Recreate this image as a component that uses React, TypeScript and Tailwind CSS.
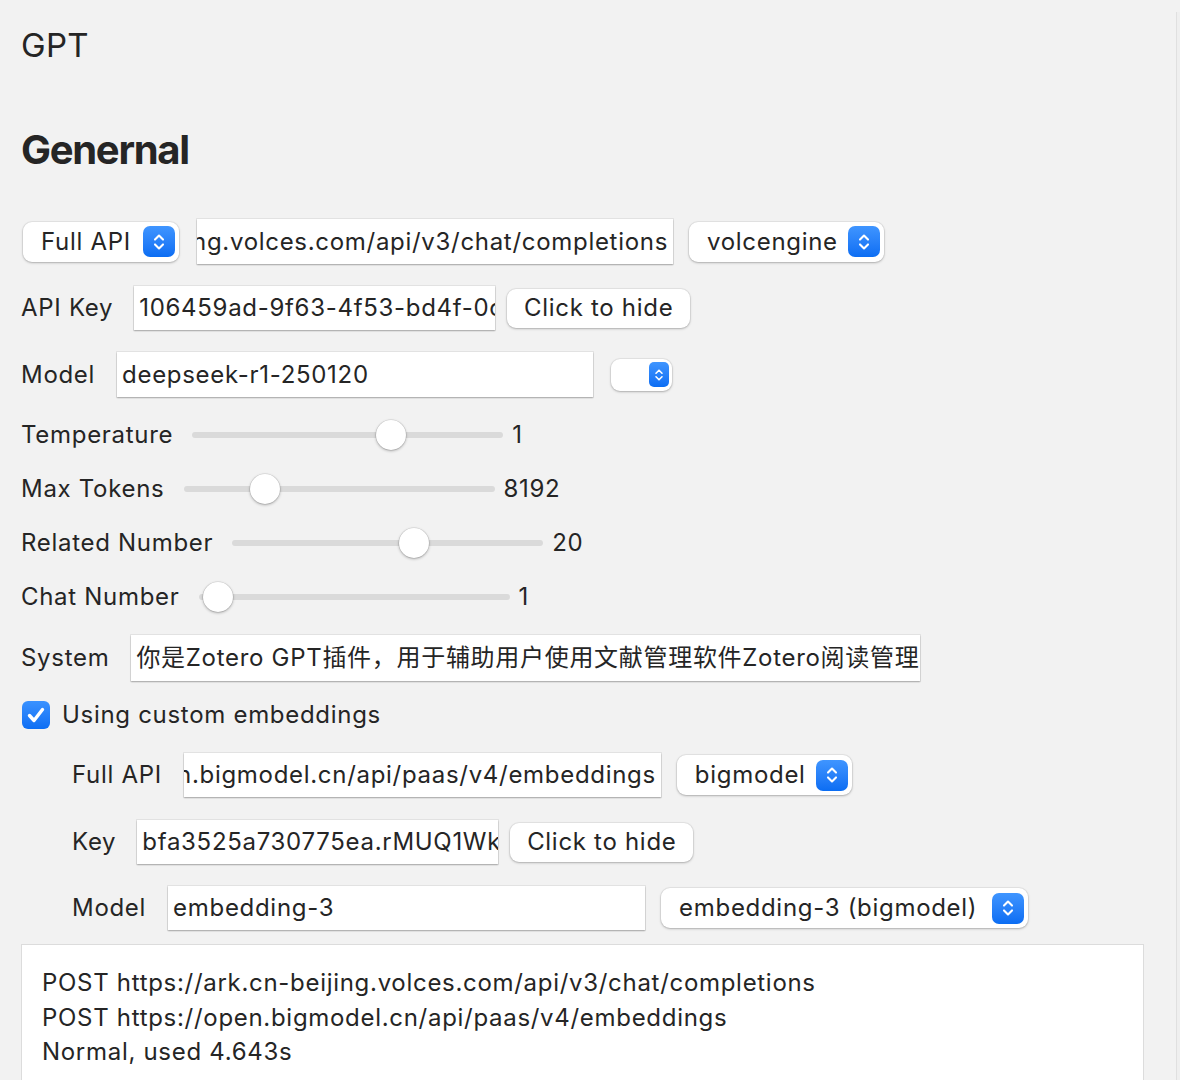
import React from "react"

const inputShadow = "bg-white shadow-[0_0_0_1px_rgba(0,0,0,0.06),0_1px_1.5px_rgba(0,0,0,0.28)]"
const popShadow = "bg-white rounded-[9px] shadow-[0_0_0_1px_rgba(0,0,0,0.05),0_1px_2.5px_rgba(0,0,0,0.25)]"

function Stepper({ small = false }: { small?: boolean }) {
  return (
    <div
      className={`flex items-center justify-center bg-gradient-to-b from-[#3f95ff] to-[#0a6df3] ${
        small ? "w-[20px] h-[25px] rounded-[5px]" : "w-[32px] h-[31px] rounded-[7px]"
      }`}
    >
      <svg viewBox="0 0 20 24" className={small ? "w-[12px] h-[16px]" : "w-[16px] h-[22px]"} fill="none" stroke="white" strokeWidth={2.6} strokeLinecap="round" strokeLinejoin="round">
        <path d="M5 9 L10 4 L15 9" />
        <path d="M5 15 L10 20 L15 15" />
      </svg>
    </div>
  )
}

function Select({ label, width }: { label: string; width: string }) {
  return (
    <div className={`${popShadow} ${width} h-[40px] flex items-center justify-between pl-[18px] pr-[4px]`}>
      <span className="whitespace-nowrap">{label}</span>
      <Stepper />
    </div>
  )
}

function Field({ text, width, end = false, height = "h-[45px]" }: { text: string; width: string; end?: boolean; height?: string }) {
  return (
    <div className={`${inputShadow} ${width} ${height} flex items-center overflow-hidden px-[5px] ${end ? "justify-end" : "justify-start"}`}>
      <span className="whitespace-nowrap shrink-0">{text}</span>
    </div>
  )
}

function HideButton() {
  return (
    <div className={`${popShadow} w-[183px] h-[39px] flex items-center justify-center`}>Click to hide</div>
  )
}

function SliderRow({ label, left, value }: { label: string; left: number; value: string }) {
  return (
    <div className="flex items-center h-[40px]">
      <span>{label}</span>
      <div className="relative ml-[19px] w-[311px] h-[6px] rounded-full bg-[#dadada]">
        <div
          className="absolute top-1/2 -translate-y-1/2 w-[30px] h-[30px] rounded-full bg-white shadow-[0_0_0_0.5px_rgba(0,0,0,0.12),0_1px_3px_rgba(0,0,0,0.3)]"
          style={{ left }}
        />
      </div>
      <span className="ml-[9px]">{value}</span>
    </div>
  )
}

export default function App() {
  return (
    <div className="flex h-[1080px] overflow-hidden bg-[#f2f2f2] text-[#252525] text-[24px] tracking-[0.7px] font-['Inter','Noto_Sans_CJK_SC',sans-serif]">
      <div className="flex-1 flex flex-col pl-[21px] pt-[25px]">
        <div className="text-[33px] leading-[40px] tracking-[0.3px]">GPT</div>
        <h1 className="mt-[61px] text-[40px] leading-[48px] font-bold tracking-[-1.3px]">Genernal</h1>

        <div className="mt-[45px] flex items-center h-[45px] pl-[2px]">
          <Select label="Full API" width="w-[156px]" />
          <div className="ml-[18px]">
            <Field text="https://ark.cn-beijing.volces.com/api/v3/chat/completions" width="w-[476px]" end />
          </div>
          <div className="ml-[16px]">
            <Select label="volcengine" width="w-[195px]" />
          </div>
        </div>

        <div className="mt-[22px] flex items-center gap-[21px] h-[44px]">
          <span>API Key</span>
          <div className="flex items-center gap-[12px]">
            <Field text="106459ad-9f63-4f53-bd4f-0c2a7e91d3b8" width="w-[361px]" height="h-[44px]" />
            <HideButton />
          </div>
        </div>

        <div className="mt-[22px] flex items-center gap-[22px] h-[45px]">
          <span>Model</span>
          <div className="flex items-center gap-[18px]">
            <Field text="deepseek-r1-250120" width="w-[476px]" />
            <div className={`${popShadow} w-[61px] h-[32px] flex items-center justify-end pr-[3px] rounded-[7px]`}>
              <Stepper small />
            </div>
          </div>
        </div>

        <div className="mt-[18px] flex flex-col gap-[14px]">
          <SliderRow label="Temperature" left={184} value="1" />
          <SliderRow label="Max Tokens" left={66} value="8192" />
          <SliderRow label="Related Number" left={167} value="20" />
          <SliderRow label="Chat Number" left={4} value="1" />
        </div>

        <div className="mt-[18px] flex items-center gap-[22px] h-[46px]">
          <span>System</span>
          <Field
            text="你是Zotero GPT插件，用于辅助用户使用文献管理软件Zotero阅读管理文献，请用中文回答问题。"
            width="w-[789px]"
            height="h-[46px]"
          />
        </div>

        <div className="mt-[16px] flex items-center h-[40px] pl-[1px]">
          <div className="w-[28px] h-[28px] rounded-[6px] bg-gradient-to-b from-[#3a92ff] to-[#0b6ef4] flex items-center justify-center">
            <svg viewBox="0 0 28 28" className="w-[28px] h-[28px]" fill="none" stroke="white" strokeWidth={3.4} strokeLinecap="round" strokeLinejoin="round">
              <path d="M7.5 14.5 L12 19.5 L20.5 8.5" />
            </svg>
          </div>
          <span className="ml-[12px]">Using custom embeddings</span>
        </div>

        <div className="pl-[51px] flex flex-col">
          <div className="mt-[20px] flex items-center gap-[22px] h-[44px]">
            <span>Full API</span>
            <div className="flex items-center gap-[16px]">
              <Field text="https://open.bigmodel.cn/api/paas/v4/embeddings" width="w-[477px]" end height="h-[44px]" />
              <Select label="bigmodel" width="w-[175px]" />
            </div>
          </div>

          <div className="mt-[23px] flex items-center gap-[21px] h-[44px]">
            <span>Key</span>
            <div className="flex items-center gap-[12px]">
              <Field text="bfa3525a730775ea.rMUQ1WkYq8Zp3nLx" width="w-[361px]" height="h-[44px]" />
              <HideButton />
            </div>
          </div>

          <div className="mt-[22px] flex items-center gap-[22px] h-[44px]">
            <span>Model</span>
            <div className="flex items-center gap-[16px]">
              <Field text="embedding-3" width="w-[477px]" height="h-[44px]" />
              <Select label="embedding-3 (bigmodel)" width="w-[367px]" />
            </div>
          </div>
        </div>

        <div className="mt-[14px] w-[1123px] h-[200px] shrink-0 bg-white border border-[#dcdcdc] pl-[20px] pt-[21px] leading-[34.5px]">
          <div>POST https://ark.cn-beijing.volces.com/api/v3/chat/completions</div>
          <div>POST https://open.bigmodel.cn/api/paas/v4/embeddings</div>
          <div>Normal, used 4.643s</div>
        </div>
      </div>
      <div className="w-[4px] mt-[12px] border-l border-[#e0e0e0] bg-[#efefef]" />
    </div>
  )
}
